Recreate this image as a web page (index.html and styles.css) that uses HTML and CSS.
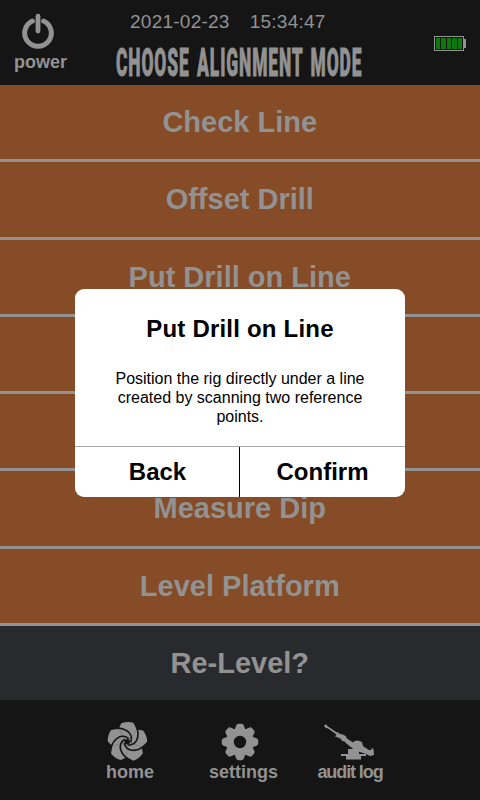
FILE: index.html
```html
<!DOCTYPE html>
<html lang="en">
<head>
<meta charset="utf-8">
<title>Choose Alignment Mode</title>
<link rel="stylesheet" href="styles.css">
</head>
<body>
<div class="screen">
  <header class="top">
    <button class="power">
      <svg width="34" height="37" viewBox="0 0 34 37" fill="none" stroke="currentColor" stroke-linecap="round"><path d="M11.400 8A13.300 13.300 0 1 0 22.600 8" stroke-width="5"/><path d="M17 3.200V18" stroke-width="4.800"/></svg>
      <span>power</span>
    </button>
    <div class="heading">
      <div class="clock"><span>2021-02-23</span><span>15:34:47</span></div>
      <h1><span>CHOOSE ALIGNMENT MODE</span></h1>
    </div>
    <div class="battery"><div class="cells"><i></i><i></i><i></i><i></i><i></i></div><b></b></div>
  </header>
  <main class="modes">
    <button>Check Line</button>
    <button>Offset Drill</button>
    <button>Put Drill on Line</button>
    <button></button>
    <button></button>
    <button>Measure Dip</button>
    <button>Level Platform</button>
    <button class="dark">Re-Level?</button>
  </main>
  <nav class="bottom">
    <button class="home">
      <svg width="42" height="40" viewBox="0 0 42 40"><defs><path id="blade" d="M0 0L-8.700-12.800L-5.800-18.500Q0-20.800 6.200-19L8.900-13.500L9.500-12Z"/><path id="gap" d="M-10-13.600Q-3-13.500 1.500-9.500Q5.500-5.500 3.500 .500"/></defs><g transform="translate(21.200 20.700)"><g fill="currentColor"><use href="#blade"/><use href="#blade" transform="rotate(72)"/><use href="#blade" transform="rotate(144)"/><use href="#blade" transform="rotate(216)"/><use href="#blade" transform="rotate(288)"/></g><g fill="none" stroke="#151515" stroke-width="1.600"><use href="#gap"/><use href="#gap" transform="rotate(72)"/><use href="#gap" transform="rotate(144)"/><use href="#gap" transform="rotate(216)"/><use href="#gap" transform="rotate(288)"/></g><circle r="2.800" fill="#151515"/></g></svg>
      <span>home</span>
    </button>
    <button class="settings">
      <svg width="38" height="38" viewBox="-19 -19 38 38"><defs><path id="tooth" d="M-5.800-11L-3.800-16.500Q-3-18.200-1.800-18.200H1.800Q3-18.200 3.800-16.500L5.800-11Z"/></defs><g fill="currentColor"><circle r="10" fill="none" stroke="currentColor" stroke-width="7.600"/><use href="#tooth"/><use href="#tooth" transform="rotate(45)"/><use href="#tooth" transform="rotate(90)"/><use href="#tooth" transform="rotate(135)"/><use href="#tooth" transform="rotate(180)"/><use href="#tooth" transform="rotate(225)"/><use href="#tooth" transform="rotate(270)"/><use href="#tooth" transform="rotate(315)"/></g></svg>
      <span>settings</span>
    </button>
    <button class="audit">
      <svg width="52" height="38" viewBox="0 0 52 38" fill="currentColor"><path d="M0 1.500L2 .300L4 2.500L13 8.500L14 8L15 9.500L20 11L22 12.500L23 14.500L29 18.500L30.500 17L34 16.500L38 18L39 22L41 23.500L45 26L47.500 26L47.500 24L49.500 25L50 31L46 32L42 30L39 29L36 28L32 27L28 24L23 20L20 17L18.500 17.500L17 15L14 13.500L11 12.500L12.500 10.500L4 4.500L1 3.500Z"/><path d="M24 25H35V30H42V32H37V35.500H22V32H17V30H24Z"/></svg>
      <span>audit log</span>
    </button>
  </nav>
  <section class="dialog" role="dialog">
    <h2>Put Drill on Line</h2>
    <p>Position the rig directly under a line<br>created by scanning two reference<br>points.</p>
    <div class="actions"><button>Back</button><button>Confirm</button></div>
  </section>
</div>
</body>
</html>
```
FILE: styles.css
```css
* { box-sizing: border-box; }
body { margin: 0; background: #151515; font-family: "Liberation Sans", Arial, sans-serif; }
button { font: inherit; color: inherit; background: none; border: 0; padding: 0; margin: 0; }
svg { display: block; }
.screen { position: relative; width: 480px; height: 800px; display: flex; flex-direction: column; color: #929292; overflow: hidden; }
.top { height: 85px; display: flex; }
.power { width: 81px; padding-top: 13px; display: flex; flex-direction: column; align-items: center; justify-content: flex-start; font-weight: bold; font-size: 18px; line-height: 20px; }
.power svg { margin-right: 6px; }
.power span { margin-top: 2px; }
.heading { width: 289px; padding: 11px 0 0 34px; }
.clock { display: flex; gap: 20px; padding-left: 15px; font-size: 19px; letter-spacing: .25px; line-height: 22px; }
h1 { margin: 8px 0 0 1px; width: 250px; height: 44px; font-family: Roboto, sans-serif; font-size: 39px; font-weight: 900; line-height: 44px; letter-spacing: 2px; word-spacing: 5px; white-space: nowrap; -webkit-text-stroke: .8px #929292; }
h1 span { display: inline-block; transform: scaleX(.446); transform-origin: left center; }
.battery { display: flex; align-items: center; height: 16px; margin: 35px 0 0 64px; }
.cells { width: 30px; height: 15px; border: 1px solid #929292; padding: 1px; display: flex; gap: 1px; }
.cells i { flex: 1; background: #0d790d; }
.battery b { width: 2px; height: 9px; background: #929292; }
.modes { height: 615px; display: grid; grid-template-rows: repeat(8, 1fr); gap: 3px; background: #929292; }
.modes button { background: #864c27; font-size: 29px; font-weight: bold; line-height: 34px; min-height: 0; padding-right: .5px; }
.modes .dark { background: #292a2e; }
.bottom { height: 100px; display: flex; font-size: 18px; font-weight: bold; line-height: 20px; padding-left: 90px; }
.bottom button { display: flex; flex-direction: column; align-items: center; justify-content: space-between; height: 82px; padding-top: 21px; }
.home { width: 80px; }
.home svg { margin-right: 6px; }
.settings { width: 147px; }
.settings svg { margin: 2px 8px 0 0; }
.audit { width: 66px; white-space: nowrap; letter-spacing: -1.1px; }
.audit svg { margin-top: 3px; }
.dialog { position: absolute; left: 75px; top: 289px; width: 330px; height: 208px; border-radius: 9px; background: #fff; color: #000; text-align: center; display: flex; flex-direction: column; overflow: hidden; }
.dialog h2 { margin: 26px 0 0; font-size: 24px; line-height: 28px; letter-spacing: .2px; }
.dialog p { margin: 26px 0 0; font-size: 16px; line-height: 19px; }
.actions { margin-top: auto; height: 51px; display: flex; border-top: 1px solid #aaa; font-size: 24px; font-weight: bold; }
.actions button { width: 165px; }
.actions button:first-child { border-right: 1px solid #000; padding-left: 1px; }
```
